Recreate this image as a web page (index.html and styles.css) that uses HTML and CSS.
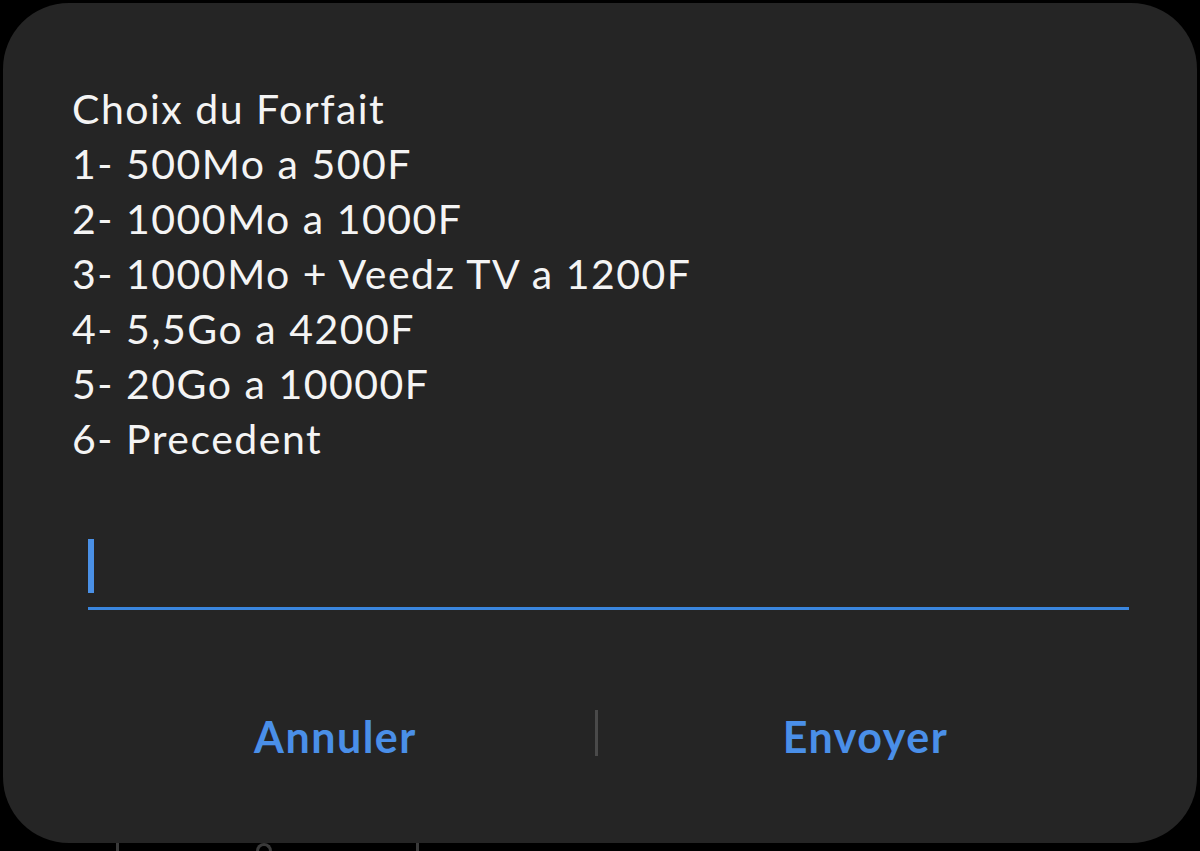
FILE: index.html
```html
<!DOCTYPE html>
<html lang="fr">
<head>
    <meta charset="UTF-8">
    <meta name="viewport" content="width=device-width, initial-scale=1.0">
    <title>USSD</title>
    <link rel="stylesheet" href="styles.css">
</head>
<body>
    <div class="dialog">
        <div class="message">
            <div>Choix du Forfait</div>
            <div>1- 500Mo a 500F</div>
            <div>2- 1000Mo a 1000F</div>
            <div>3- 1000Mo + Veedz TV a 1200F</div>
            <div>4- 5,5Go a 4200F</div>
            <div>5- 20Go a 10000F</div>
            <div>6- Precedent</div>
        </div>
        <div class="field">
            <span class="cursor"></span>
        </div>
        <div class="actions">
            <button class="btn">Annuler</button>
            <span class="divider"></span>
            <button class="btn">Envoyer</button>
        </div>
    </div>
    <div class="behind">
        <span class="mark mark-a"></span>
        <span class="mark mark-b"></span>
        <span class="mark mark-c"></span>
    </div>
</body>
</html>
```

FILE: styles.css
```css
body {
    margin: 0;
    background: #000;
    font-family: Lato, "Noto Sans", sans-serif;
    height: 851px;
    overflow: hidden;
}

.dialog {
    margin: 3px 3px 0 3px;
    height: 840px;
    box-sizing: border-box;
    background: #252525;
    border-radius: 66px;
    padding: 78px 68px 0 69px;
    display: flex;
    flex-direction: column;
}

.message {
    color: #f4f4f4;
    font-size: 41px;
    line-height: 55px;
    letter-spacing: 1.5px;
}

.field {
    margin: 62px 0 0 16px;
    height: 82px;
    border-bottom: 3px solid #3a86de;
    padding-top: 11px;
    box-sizing: border-box;
}

.cursor {
    display: block;
    width: 6px;
    height: 54px;
    background: #4a90e6;
}

.actions {
    display: flex;
    align-items: center;
    margin-top: 99px;
    height: 48px;
}

.btn {
    flex: 1;
    background: none;
    border: none;
    color: #4a8fe8;
    font-family: Lato, "Noto Sans", sans-serif;
    font-size: 43px;
    font-weight: 700;
    letter-spacing: 1.5px;
    padding: 6px 0 0 0;
}

.divider {
    width: 3px;
    height: 46px;
    margin-left: -4px;
    margin-right: 4px;
    background: #4a4a4a;
}

.behind {
    display: flex;
    height: 8px;
}

.mark {
    display: block;
    width: 3px;
    height: 8px;
    background: #3a3a3a;
}

.mark-a { margin-left: 116px; }
.mark-b { margin-left: 137px; width: 16px; border-radius: 8px 8px 0 0; background: none; border: 3px solid #3a3a3a; border-bottom: none; box-sizing: border-box; }
.mark-c { margin-left: 144px; }
```
